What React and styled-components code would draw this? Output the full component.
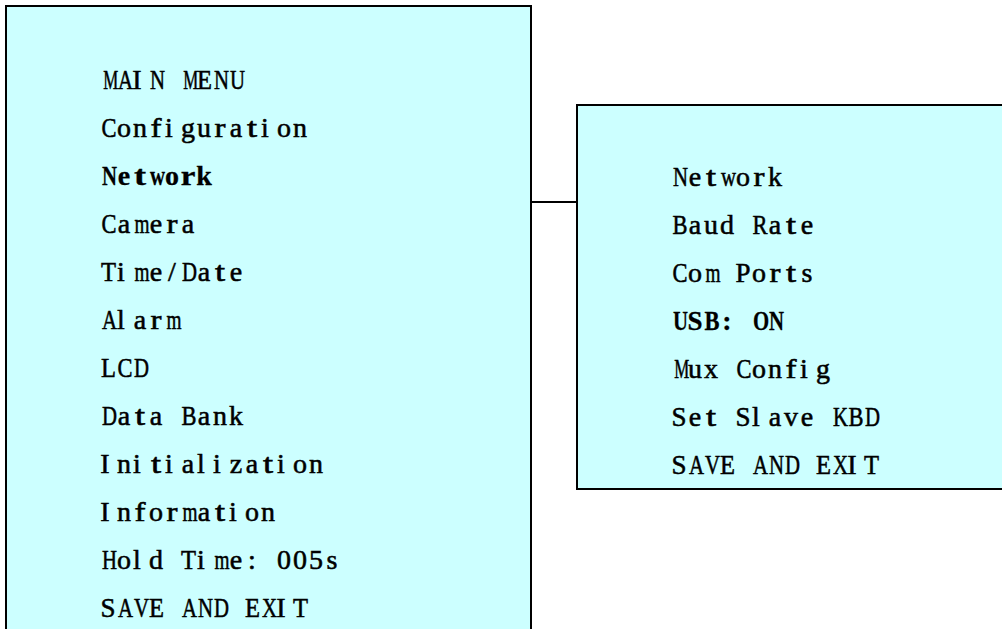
import styled, { createGlobalStyle } from "styled-components";

const GlobalStyle = createGlobalStyle`
  html, body {
    margin: 0;
    padding: 0;
    background: #ffffff;
    overflow: hidden;
  }
`;

const Page = styled.div`
  display: flex;
  align-items: flex-start;
  width: 1002px;
  height: 629px;
  overflow: hidden;
  padding-left: 5px;
  box-sizing: border-box;
`;

const Panel = styled.div`
  background: #ccffff;
  border: 2px solid #000;
  box-sizing: border-box;
  flex-shrink: 0;
`;

const MainPanel = styled(Panel)`
  margin-top: 5px;
  width: 527px;
  height: 700px;
  border-bottom: none;
  padding: 49px 0 0 93px;
`;

const SubPanel = styled(Panel)`
  margin-top: 104px;
  width: 460px;
  border-right: none;
  padding: 47px 0 0 93px;
  height: 386px;
`;

const Connector = styled.div`
  margin-top: 201px;
  width: 44px;
  height: 2px;
  background: #000;
  flex-shrink: 0;
`;

const Item = styled.div`
  font-family: "Liberation Serif", "Times New Roman", serif;
  font-size: 28px;
  line-height: 48px;
  height: 48px;
  color: #000;
  white-space: pre;
  font-weight: ${(p) => (p.$active ? 700 : 400)};
  -webkit-text-stroke: ${(p) => (p.$active ? "0.3px #000" : "0.55px #000")};
`;

// one fixed cell per character, like the half-width font of the terminal
const Cell = styled.span`
  display: inline-block;
  width: 16px;
  text-align: center;
  white-space: pre;
  transform-origin: center;
`;

// Times advance widths (em), used to fit each glyph to its cell
const WIDTHS = {
  A: 0.722, B: 0.667, C: 0.667, D: 0.722, E: 0.611, F: 0.556, G: 0.722,
  H: 0.722, I: 0.333, K: 0.722, L: 0.611, M: 0.889, N: 0.722, O: 0.722,
  P: 0.556, R: 0.667, S: 0.556, T: 0.611, U: 0.722, V: 0.722, X: 0.722,
  m: 0.778, w: 0.722, t: 0.278, f: 0.333, r: 0.333,
};
const NARROW = "ilI";
const SIZE = 28;

const cellStyle = (ch) => {
  const w = (WIDTHS[ch] || 0.5) * SIZE;
  if (w > 15) return { transform: `scaleX(${(15 / w).toFixed(3)})` };
  if ("tfr".includes(ch)) return { transform: `scaleX(${Math.min(1.3, 11 / w).toFixed(3)})` };
  if (NARROW.includes(ch)) return { transform: "translateX(-3px)" };
  return undefined;
};

const MonoText = ({ text }) =>
  text.split("").map((ch, i) => (
    <Cell key={i} style={cellStyle(ch)}>
      {ch}
    </Cell>
  ));

const mainItems = [
  "MAIN MENU",
  "Configuration",
  "Network",
  "Camera",
  "Time/Date",
  "Alarm",
  "LCD",
  "Data Bank",
  "Initialization",
  "Information",
  "Hold Time: 005s",
  "SAVE AND EXIT",
];

const subItems = [
  "Network",
  "Baud Rate",
  "Com Ports",
  "USB: ON",
  "Mux Config",
  "Set Slave KBD",
  "SAVE AND EXIT",
];

const App = () => {
  return (
    <Page>
      <GlobalStyle />
      <MainPanel>
        {mainItems.map((label) => (
          <Item key={label} $active={label === "Network"}>
            <MonoText text={label} />
          </Item>
        ))}
      </MainPanel>
      <Connector />
      <SubPanel>
        {subItems.map((label) => (
          <Item key={label} $active={label === "USB: ON"}>
            <MonoText text={label} />
          </Item>
        ))}
      </SubPanel>
    </Page>
  );
};

export default App;
